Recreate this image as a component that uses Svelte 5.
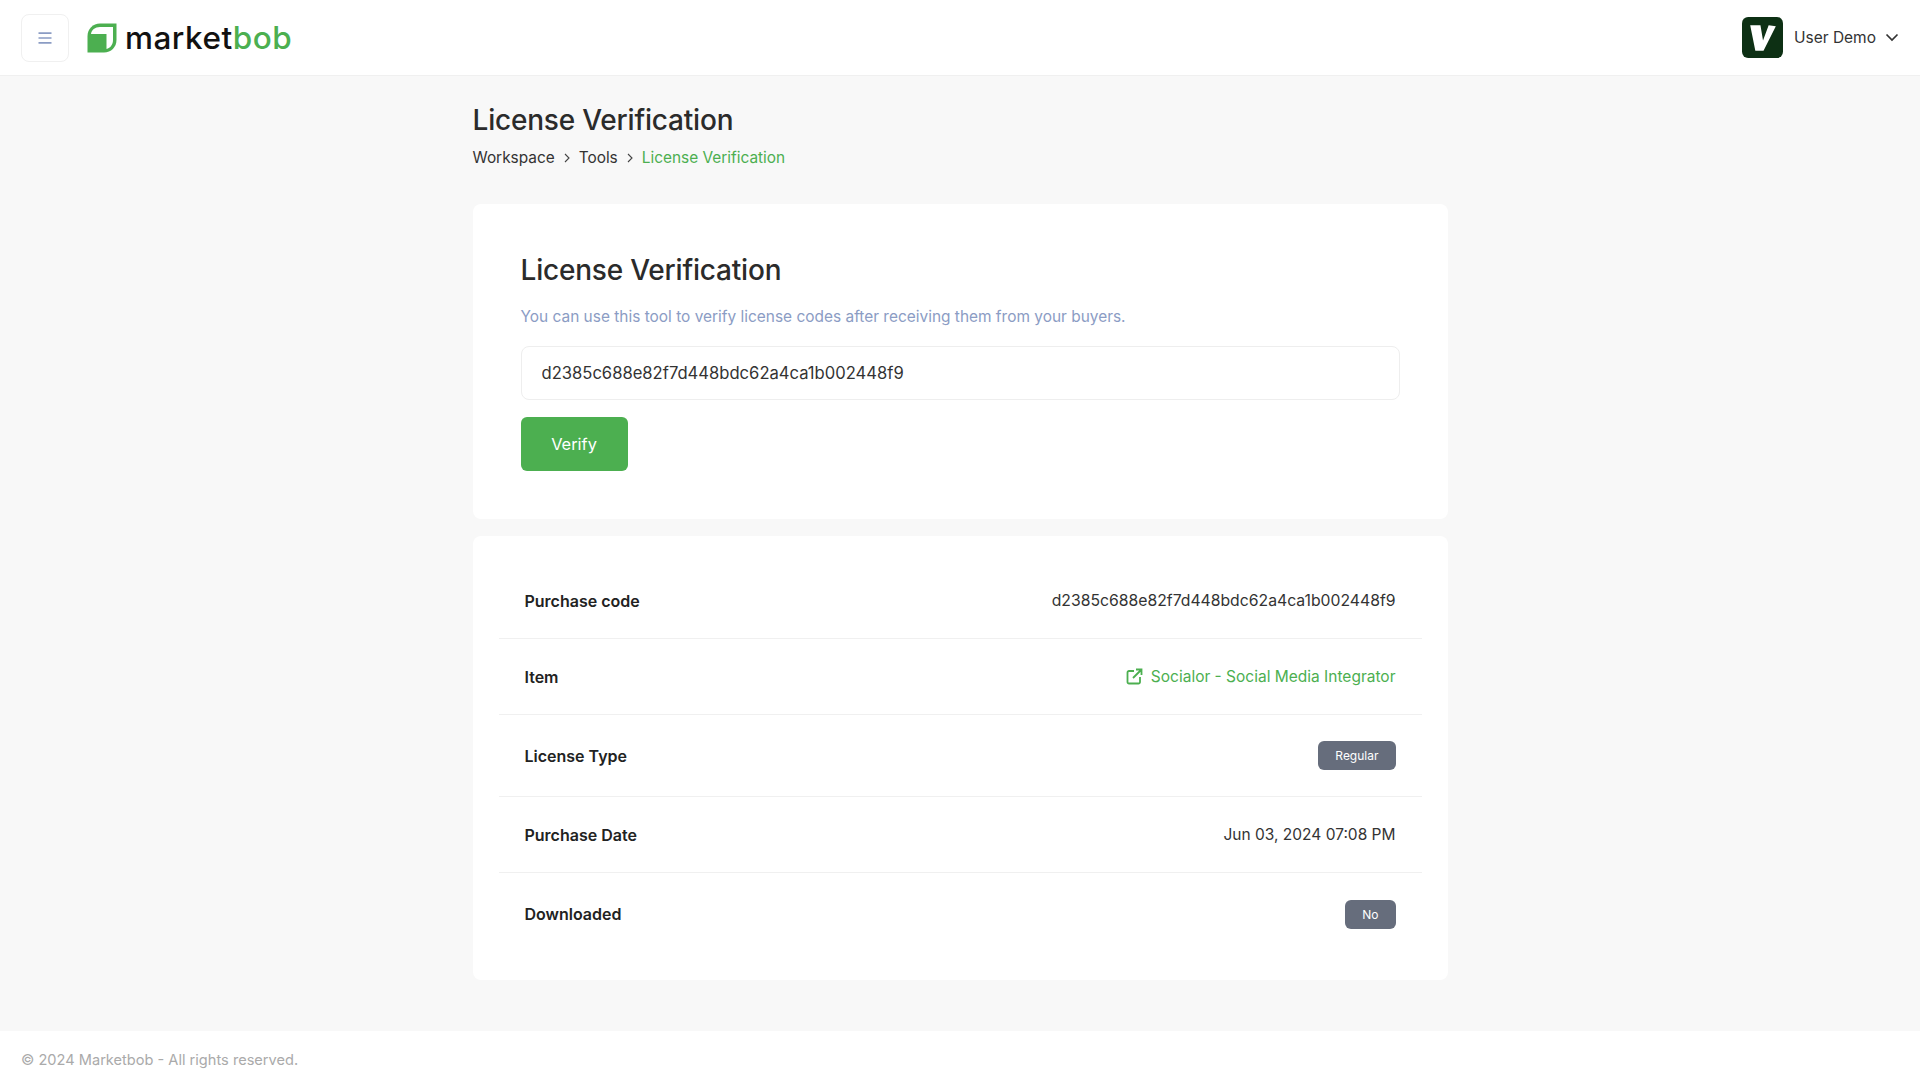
<script>
  const rows = [
    { label: 'Purchase code', kind: 'code', value: 'd2385c688e82f7d448bdc62a4ca1b002448f9', height: 'short' },
    { label: 'Item', kind: 'link', value: 'Socialor - Social Media Integrator', height: 'short' },
    { label: 'License Type', kind: 'badge', value: 'Regular', height: 'tall' },
    { label: 'Purchase Date', kind: 'text', value: 'Jun 03, 2024 07:08 PM', height: 'short' },
    { label: 'Downloaded', kind: 'badge', value: 'No', height: 'tall' }
  ];
</script>

<div class="page">
  <header class="topbar">
    <div class="brand-side">
      <button class="menu" aria-label="Menu">
        <svg width="14" height="12" viewBox="0 0 14 12"><path d="M0.5 1.2h13M0.5 6h13M0.5 10.8h13" stroke="#8b9cc4" stroke-width="1.7" fill="none"/></svg>
      </button>
      <div class="logo">
        <svg width="30" height="30" viewBox="0 0 30 30"><path d="M29.500 0.500H13C6 .5 .5 6 .5 13v16.500H17c7 0 12.500-5.500 12.500-12.500z" fill="#4caf50"/><path d="M26 4H13C8 4 4.500 7 4 11h15.500v15c4-1 6.500-4.500 6.500-9z" fill="#fff"/></svg>
        <span class="wordmark">market<span class="bob">bob</span></span>
      </div>
    </div>
    <div class="user">
      <div class="avatar">
        <svg width="41" height="41" viewBox="0 0 40 40"><rect width="40" height="40" rx="6" fill="#0d3014"/><path d="M8 8h10l2.500 15L26 8l7 1-12 24h-8z" fill="#fff"/></svg>
      </div>
      <span class="uname">User Demo</span>
      <svg class="chev" width="14" height="9" viewBox="0 0 14 9"><path d="M1.500 1.500 7 7l5.500-5.500" stroke="#333" stroke-width="1.700" fill="none"/></svg>
    </div>
  </header>

  <main class="main">
    <div class="container">
      <h1>License Verification</h1>
      <nav class="crumbs">
        <span>Workspace</span>
        <svg width="8" height="10" viewBox="0 0 8 10"><path d="M2 1l4 4-4 4" stroke="#444" stroke-width="1.100" fill="none"/></svg>
        <span>Tools</span>
        <svg width="8" height="10" viewBox="0 0 8 10"><path d="M2 1l4 4-4 4" stroke="#444" stroke-width="1.100" fill="none"/></svg>
        <span class="current">License Verification</span>
      </nav>

      <section class="card form-card">
        <h2>License Verification</h2>
        <p>You can use this tool to verify license codes after receiving them from your buyers.</p>
        <input type="text" value="d2385c688e82f7d448bdc62a4ca1b002448f9" />
        <button class="verify">Verify</button>
      </section>

      <section class="card list-card">
        {#each rows as row}
          <div class="row {row.height}">
            <span class="label">{row.label}</span>
            {#if row.kind === 'text'}
              <span class="value">{row.value}</span>
            {:else if row.kind === 'code'}
              <span class="value code">{row.value}</span>
            {:else if row.kind === 'link'}
              <span class="link">
                <svg width="17" height="17" viewBox="0 0 17 17" fill="none" stroke="#4caf50" stroke-width="1.800"><path d="M8 3H3a1.500 1.500 0 0 0-1.500 1.500v9.500A1.500 1.500 0 0 0 3 15.500h9.500a1.500 1.500 0 0 0 1.500-1.500V9"/><path d="M7 10 15 2M10 1.500h5.500V7"/></svg>
                {row.value}
              </span>
            {:else}
              <span class="badge">{row.value}</span>
            {/if}
          </div>
        {/each}
      </section>
    </div>
  </main>

  <footer class="footer">© 2024 Marketbob - All rights reserved.</footer>
</div>

<style>
  :global(body) {
    margin: 0;
    background: #f8f8f8;
    font-family: Inter, "Liberation Sans", sans-serif;
    color: #2b2b2b;
  }
  .page {
    min-height: 1088px;
    display: flex;
    flex-direction: column;
  }
  .topbar {
    height: 76px;
    box-sizing: border-box;
    background: #fff;
    border-bottom: 1px solid #f0f0f0;
    display: flex;
    align-items: center;
    justify-content: space-between;
    padding: 0 21px;
  }
  .brand-side { display: flex; align-items: center; gap: 18px; }
  .menu {
    width: 48px;
    height: 48px;
    background: #fff;
    border: 1px solid #f0f0f0;
    border-radius: 8px;
    display: flex;
    align-items: center;
    justify-content: center;
    padding: 0;
  }
  .logo { display: flex; align-items: center; gap: 8px; }
  .logo svg { display: block; }
  .wordmark {
    font-size: 31.500px;
    font-weight: 500;
    line-height: 40px;
    color: #111;
    letter-spacing: 0.5px;
  }
  .bob { color: #4caf50; }
  .user { display: flex; align-items: center; }
  .avatar { width: 41px; height: 41px; margin-right: 11px; }
  .avatar svg { display: block; }
  .uname { font-size: 15.500px; color: #333; margin-right: 9px; }
  .main { flex: 1; padding-top: 22px; }
  .container { width: 975px; margin: 0 auto; }
  h1 {
    margin: 0;
    font-size: 28px;
    font-weight: 500;
    line-height: 44px;
    letter-spacing: -0.2px;
  }
  .crumbs {
    display: flex;
    align-items: center;
    gap: 8px;
    margin-top: 4px;
    font-size: 15.400px;
    line-height: 24px;
    color: #333;
  }
  .current { color: #4caf50; }
  .card { background: #fff; border-radius: 8px; }
  .form-card {
    margin-top: 34px;
    padding: 48px;
    height: 315px;
    box-sizing: border-box;
  }
  h2 {
    margin: 0;
    font-size: 28px;
    font-weight: 500;
    line-height: 36px;
    letter-spacing: -0.2px;
  }
  p {
    margin: 17px 0 0;
    font-size: 15.450px;
    line-height: 24px;
    color: #8b9cc4;
  }
  input {
    display: block;
    width: 100%;
    box-sizing: border-box;
    height: 54px;
    margin-top: 17px;
    padding: 0 20px;
    border: 1px solid #eee;
    border-radius: 8px;
    font: 16.600px Inter, sans-serif;
    color: #333;
    background: #fff;
    outline: none;
  }
  .verify {
    display: block;
    margin-top: 17px;
    width: 107px;
    height: 54px;
    background: #4caf50;
    color: #fff;
    border: 0;
    border-radius: 6px;
    font: 16.400px Inter, sans-serif;
  }
  .list-card {
    margin-top: 17px;
    padding: 27px 26px 25px;
  }
  .row {
    display: flex;
    align-items: center;
    justify-content: space-between;
    padding: 0 26px;
    box-sizing: border-box;
    border-bottom: 1px solid #f0f0f0;
    font-size: 15.500px;
  }
  .row:last-child { border-bottom: 0; }
  .short { height: 76px; }
  .tall { height: 82px; }
  .label { font-size: 16px; font-weight: 600; color: #222; }
  .value { color: #333; }
  .code { font-size: 15.750px; }
  .link { display: flex; align-items: center; gap: 8px; color: #4caf50; }
  .badge {
    background: #666d7c;
    color: #fff;
    border-radius: 6px;
    font-size: 12px;
    line-height: 29px;
    padding: 0 17px;
  }
  .footer {
    height: 57px;
    background: #fff;
    display: flex;
    align-items: center;
    padding-left: 21px;
    font-size: 14.600px;
    color: #aaa;
  }
</style>
